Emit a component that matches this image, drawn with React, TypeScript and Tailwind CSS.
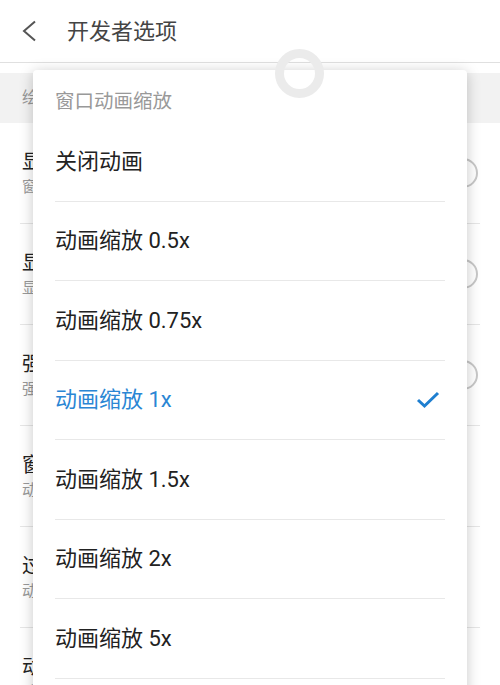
import React from "react";

const font = { fontFamily: 'Roboto, "Noto Sans CJK SC", sans-serif' };

const bgItems = [
  { title: "显示surface更新", sub: "窗口中的surface更新时全部闪烁", toggle: true },
  { title: "显示布局边界", sub: "显示剪辑边界、边距等", toggle: true },
  { title: "强制使用从右到左的布局方向", sub: "强制将所有语言的屏幕布局方向改为从右到左", toggle: true },
  { title: "窗口动画缩放", sub: "动画缩放 1x", toggle: false },
  { title: "过渡动画缩放", sub: "动画缩放 1x", toggle: false },
  { title: "动画程序时长缩放", sub: "动画缩放 1x", toggle: false },
];

const options = ["关闭动画", "动画缩放 0.5x", "动画缩放 0.75x", "动画缩放 1x", "动画缩放 1.5x", "动画缩放 2x", "动画缩放 5x"];
const selected = 3;

export default function App() {
  return (
    <div className="relative w-[500px] h-[685px] overflow-hidden bg-white" style={font}>
      {/* page behind the dialog */}
      <div className="h-[63px] flex items-center border-b border-[#e0e0e0]">
        <svg width="16" height="22" viewBox="0 0 16 22" className="ml-[21px]">
          <polyline points="14,1.5 3,11 14,20.5" fill="none" stroke="#555" strokeWidth="2" />
        </svg>
        <span className="ml-[30px] text-[22px] text-[#444]">开发者选项</span>
      </div>
      <div className="mt-[10px] h-[50px] bg-[#f2f2f2] flex items-center px-[22px] text-[16px] text-[#999]">
        绘图
      </div>
      {bgItems.map((it, i) => (
        <div key={i} className="h-[101px] mx-[20px] border-b border-[#e6e6e6] flex items-center justify-between">
          <div className="pl-[2px] w-[40px] overflow-hidden whitespace-nowrap">
            <div className="text-[20px] leading-[28px] text-[#222]">{it.title}</div>
            <div className="text-[15px] leading-[22px] text-[#999]">{it.sub}</div>
          </div>
          {it.toggle && <div className="w-[46px] h-[30px] rounded-full border-2 border-[#c8c8c8] mr-[2px]" />}
        </div>
      ))}

      {/* dialog */}
      <div className="absolute left-[33px] top-[70px] w-[434px] h-[640px] bg-white rounded-[4px] shadow-[0_2px_14px_rgba(0,0,0,0.22)]">
        <div className="pt-[20px] pb-[8px] px-[22px] text-[19.5px] leading-[24px] text-[#999]">窗口动画缩放</div>
        <div className="px-[22px]">
          {options.map((o, i) => (
            <div
              key={o}
              className={`h-[79.5px] border-b border-[#e8e8e8] flex items-center justify-between text-[22px] ${
                i === selected ? "text-[#2a86d4]" : "text-[#222]"
              }`}
            >
              <span>{o}</span>
              {i === selected && (
                <svg width="24" height="18" viewBox="0 0 24 18" className="mr-[5px]">
                  <polyline points="2,9 8.5,15 22,2" fill="none" stroke="#1f7fd0" strokeWidth="3" />
                </svg>
              )}
            </div>
          ))}
        </div>
      </div>

      {/* refresh ring */}
      <div className="absolute left-[275px] top-[49px] w-[49px] h-[49px] rounded-full border-[9px] border-[#ebebeb]" />
    </div>
  );
}
